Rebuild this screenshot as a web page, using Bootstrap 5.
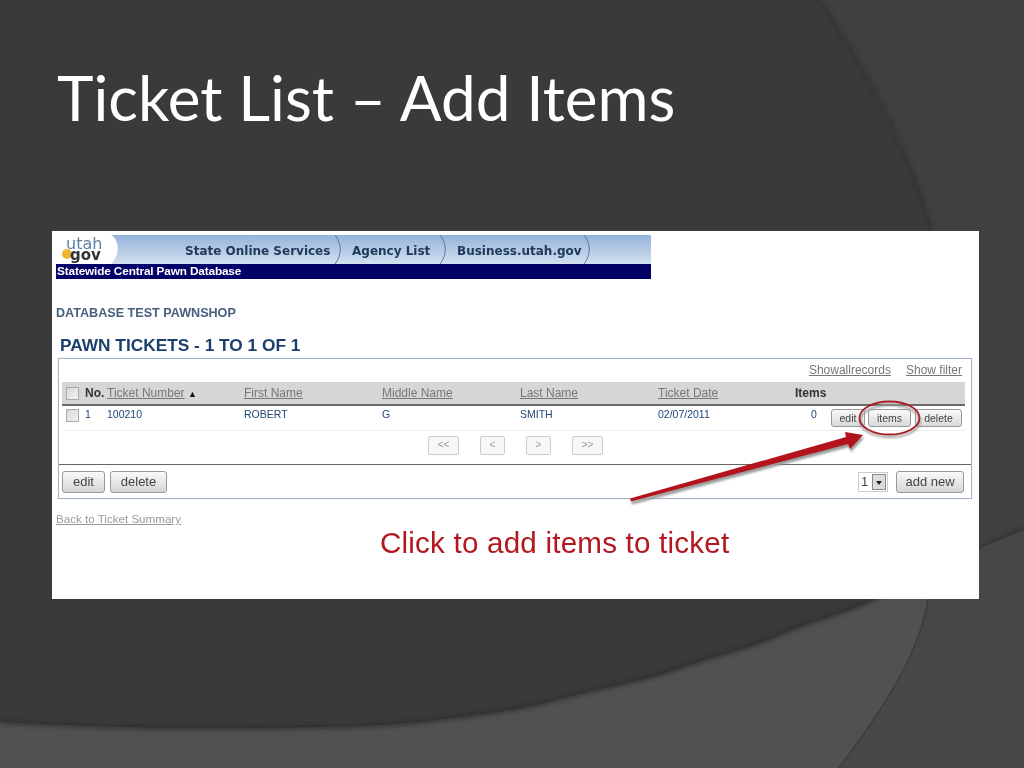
<!DOCTYPE html>
<html lang="en">
<head>
<meta charset="utf-8">
<title>Ticket List – Add Items</title>
<link href="https://cdn.jsdelivr.net/npm/bootstrap@5.3.0/dist/css/bootstrap.min.css" rel="stylesheet">
<style>
html,body{margin:0;width:1024px;height:768px;overflow:hidden;background:#3a3a3a}
.slide{position:relative;width:1024px;height:768px;padding:0 45px 0 52px;font-family:"Liberation Sans",Arial,sans-serif}
.slide-bg{position:absolute;left:0;top:0;width:1024px;height:768px}
.slide-title{position:relative;height:231px;margin:0;padding:62px 0 0 5px;color:#fff;font:400 62px/70px Lato,sans-serif;white-space:nowrap}
.shot{position:relative;height:368px;background:#fff;padding:4px 8px 0 4px;overflow:hidden}
.shot-inner{filter:blur(.45px)}
.banner{width:595px;height:44px}
.tabbar{height:29px;background:linear-gradient(#93b4db,#d3e0ef);position:relative;color:#213a5c;font-weight:700;font-size:12px;font-family:"DejaVu Sans",sans-serif;letter-spacing:0;overflow:hidden}
.tabbar svg{position:absolute;left:0;top:0}
.tab-text{position:absolute;top:8px;line-height:16px;white-space:nowrap}
.logo-utah{position:absolute;left:10px;top:2px;font-size:16px;line-height:13px;color:#5d7fa8;font-weight:400}
.logo-gov{position:absolute;left:14px;top:14px;font-size:15px;line-height:13px;color:#333;font-weight:700}
.logo-dot{position:absolute;left:6px;top:14px;width:10px;height:10px;border-radius:50%;background:#f2b632}
.subbar{height:15px;background:#000066;color:#fff;font-size:11.8px;line-height:15px;font-weight:700;padding-left:1px;letter-spacing:-.15px}
.shop{margin:26px 0 0;font-size:12.6px;line-height:16px;font-weight:700;color:#47607f;height:16px}
.page-head{margin:14px 0 0 4px;font-size:17.3px;line-height:20px;font-weight:700;color:#1d3f6e;height:20px}
.list-box{margin:3px 0 0 2px;height:141px;width:914px;border:1px solid #a4b3c9;padding:0 5px 0 3px;box-shadow:0 0 1px #c5cfdd}
.top-links{height:23px;font-size:12px;line-height:23px;padding-right:4px;gap:15px}
.top-links a,.col-link{color:#777;text-decoration:underline}
.pawn-table{table-layout:fixed;width:903px;margin:0;font-size:10.5px;color:#1f4476}
.pawn-table th{background:#d6d6d6;height:23px;padding:0;border-bottom:2px solid #6b6b6b;font-size:12px;font-weight:400;vertical-align:middle;color:#777}
.pawn-table th.strong-h{font-weight:700;color:#333}
.sort-mark{font-size:9px;color:#111}
.pawn-table td{height:25px;padding:2px 0 0;border-bottom:1px solid #eee;vertical-align:top;color:#1f4476;font-size:10.5px;line-height:13px;background:transparent}
.fake-check{display:block;width:13px;height:13px;margin-left:4px;background:linear-gradient(135deg,#d8d8d8,#f4f4f4);border:1px solid #aaa}
.row-gap{padding-top:3px!important}
.mini-btn{display:inline-flex;align-items:center;justify-content:center;height:18px;background:linear-gradient(#fafafa,#d9d9d9);border:1px solid #999;border-radius:3px;color:#444;font-size:10.5px;line-height:1;padding:0}
.pager{height:34px;gap:21px;padding:5px 0 0 369px;border-bottom:1px solid #666;margin:0 -5px 0 -3px}
.pg{width:31px;height:19px;border:1px solid #ccc;border-radius:2px;background:#f7f7f7;color:#999;font-size:10px;line-height:16px;text-align:center}
.pg-s{width:25px}
.foot-bar{height:33px;align-items:center;padding:2px 2px 0 0}
.big-btn{height:22px;font-size:13px;background:linear-gradient(#fafafa,#d5d5d5);border:1px solid #999;border-radius:3px;color:#444;display:inline-flex;align-items:center;justify-content:center}
.foot-left{gap:5px}
.pick{display:inline-flex;height:20px;width:30px;border:1px solid #ccc;font-size:13px;color:#444;align-items:center;padding-left:2px;justify-content:space-between}
.pick b{width:14px;height:16px;background:#ddd;border:1px solid #888;position:relative;margin-right:1px}
.pick b::after{content:"";position:absolute;left:3px;top:6px;border:3px solid transparent;border-top:4px solid #222}
.back-link{display:block;margin:13px 0 0;font-size:11.6px;line-height:14px;color:#999;text-decoration:underline}
.note{margin:1px 0 0 324px;font-size:29.6px;line-height:32px;color:#b3181f;white-space:nowrap;letter-spacing:.2px}
.markup{position:absolute;left:0;top:0;width:927px;height:368px;pointer-events:none}
</style>
</head>
<body>
<div class="slide">
  <svg class="slide-bg" viewBox="0 0 1024 768" aria-hidden="true">
    <defs><filter id="soft"><feGaussianBlur stdDeviation="2"/></filter></defs>
    <rect width="1024" height="768" fill="#3a3a3a"/>
    <path d="M820 0C860 60 905 135 932 231L950 600H1024V0Z" fill="#404040"/>
    <path d="M820 0C860 60 905 135 932 231" fill="none" stroke="#2f2f2f" stroke-width="2" filter="url(#soft)"/>
    <path d="M0 722C90 727 180 729 250 728C320 727 375 727 420 722C470 716 515 711 555 700C600 688 640 682 679 668C720 654 750 649 784 633C815 619 845 614 875 599C925 574 975 550 1024 530V768H0Z" fill="#515151"/>
    <path d="M0 722C90 727 180 729 250 728C320 727 375 727 420 722C470 716 515 711 555 700C600 688 640 682 679 668C720 654 750 649 784 633C815 619 845 614 875 599C925 574 975 550 1024 530" fill="none" stroke="#2c2c2c" stroke-width="3" filter="url(#soft)"/>
    <path d="M928 599C920 650 890 700 839 768H1024V530L980 548L976 599Z" fill="#474747"/>
    <path d="M928 599C920 650 890 700 839 768" fill="none" stroke="#3c3c3c" stroke-width="1.5"/>
  </svg>
  <h1 class="slide-title">Ticket List – Add Items</h1>
  <div class="shot">
    <div class="shot-inner">
      <div class="banner">
        <div class="tabbar">
          <svg width="595" height="29" viewBox="0 0 595 29">
            <path d="M0 0H55C64 5 64 20 55 29H0Z" fill="#fff"/>
            <path d="M279 0C286 9 286 20 279 29M384 0C391 9 391 20 384 29M528 0C535 9 535 20 528 29" fill="none" stroke="#5c7799" stroke-width="1"/>
          </svg>
          <span class="logo-dot"></span><span class="logo-utah">utah</span><span class="logo-gov">gov</span>
          <span class="tab-text" style="left:129px">State Online Services</span>
          <span class="tab-text" style="left:296px">Agency List</span>
          <span class="tab-text" style="left:401px">Business.utah.gov</span>
        </div>
        <div class="subbar">Statewide Central Pawn Database</div>
      </div>
      <div class="shop">DATABASE TEST PAWNSHOP</div>
      <div class="page-head">PAWN TICKETS - 1 TO 1 OF 1</div>
      <div class="list-box">
        <div class="top-links d-flex justify-content-end"><a href="#">Showallrecords</a><a href="#">Show filter</a></div>
        <table class="pawn-table table">
          <colgroup><col style="width:23px"><col style="width:22px"><col style="width:137px"><col style="width:138px"><col style="width:138px"><col style="width:138px"><col style="width:137px"><col style="width:36px"><col></colgroup>
          <thead><tr>
            <th><span class="fake-check"></span></th>
            <th class="strong-h">No.</th>
            <th><span class="col-link">Ticket Number</span> <span class="sort-mark">▲</span></th>
            <th><span class="col-link">First Name</span></th>
            <th><span class="col-link">Middle Name</span></th>
            <th><span class="col-link">Last Name</span></th>
            <th><span class="col-link">Ticket Date</span></th>
            <th class="strong-h" colspan="2">Items</th>
          </tr></thead>
          <tbody><tr>
            <td class="row-gap"><span class="fake-check"></span></td>
            <td>1</td><td>100210</td><td>ROBERT</td><td>G</td><td>SMITH</td><td>02/07/2011</td>
            <td class="ps-3">0</td>
            <td><div class="d-flex" style="gap:3px;margin-top:1px"><span class="mini-btn" style="width:34px">edit</span><span class="mini-btn" style="width:43px;margin-right:1px">items</span><span class="mini-btn" style="width:47px">delete</span></div></td>
          </tr></tbody>
        </table>
        <div class="pager d-flex">
          <span class="pg">&lt;&lt;</span><span class="pg pg-s">&lt;</span><span class="pg pg-s">&gt;</span><span class="pg">&gt;&gt;</span>
        </div>
        <div class="foot-bar d-flex justify-content-between">
          <div class="d-flex foot-left"><span class="big-btn" style="width:43px">edit</span><span class="big-btn" style="width:57px">delete</span></div>
          <div class="d-flex gap-2 align-items-center"><span class="pick">1<b></b></span><span class="big-btn" style="width:68px">add new</span></div>
        </div>
      </div>
      <a class="back-link" href="#">Back to Ticket Summary</a>
      <div class="note">Click to add items to ticket</div>
    </div>
    <svg class="markup" viewBox="0 0 927 368" aria-hidden="true">
      <defs><filter id="sh"><feGaussianBlur stdDeviation="1.3"/></filter></defs>
      <ellipse cx="838" cy="190" rx="30" ry="16" fill="none" stroke="#999" stroke-width="2" filter="url(#sh)"/>
      <ellipse cx="837.5" cy="187" rx="30" ry="16.5" fill="none" stroke="#a82028" stroke-width="1.8"/>
      <path d="M578 267.500L794 206L793 201L811 204L798 218L796 213L579 270.500Z" fill="#999" filter="url(#sh)" transform="translate(1 3)"/>
      <path d="M578 267.500L794 206L793 201L811 204L798 218L796 213L579 270.500Z" fill="#b3141c"/>
    </svg>
  </div>
</div>
</body>
</html>
